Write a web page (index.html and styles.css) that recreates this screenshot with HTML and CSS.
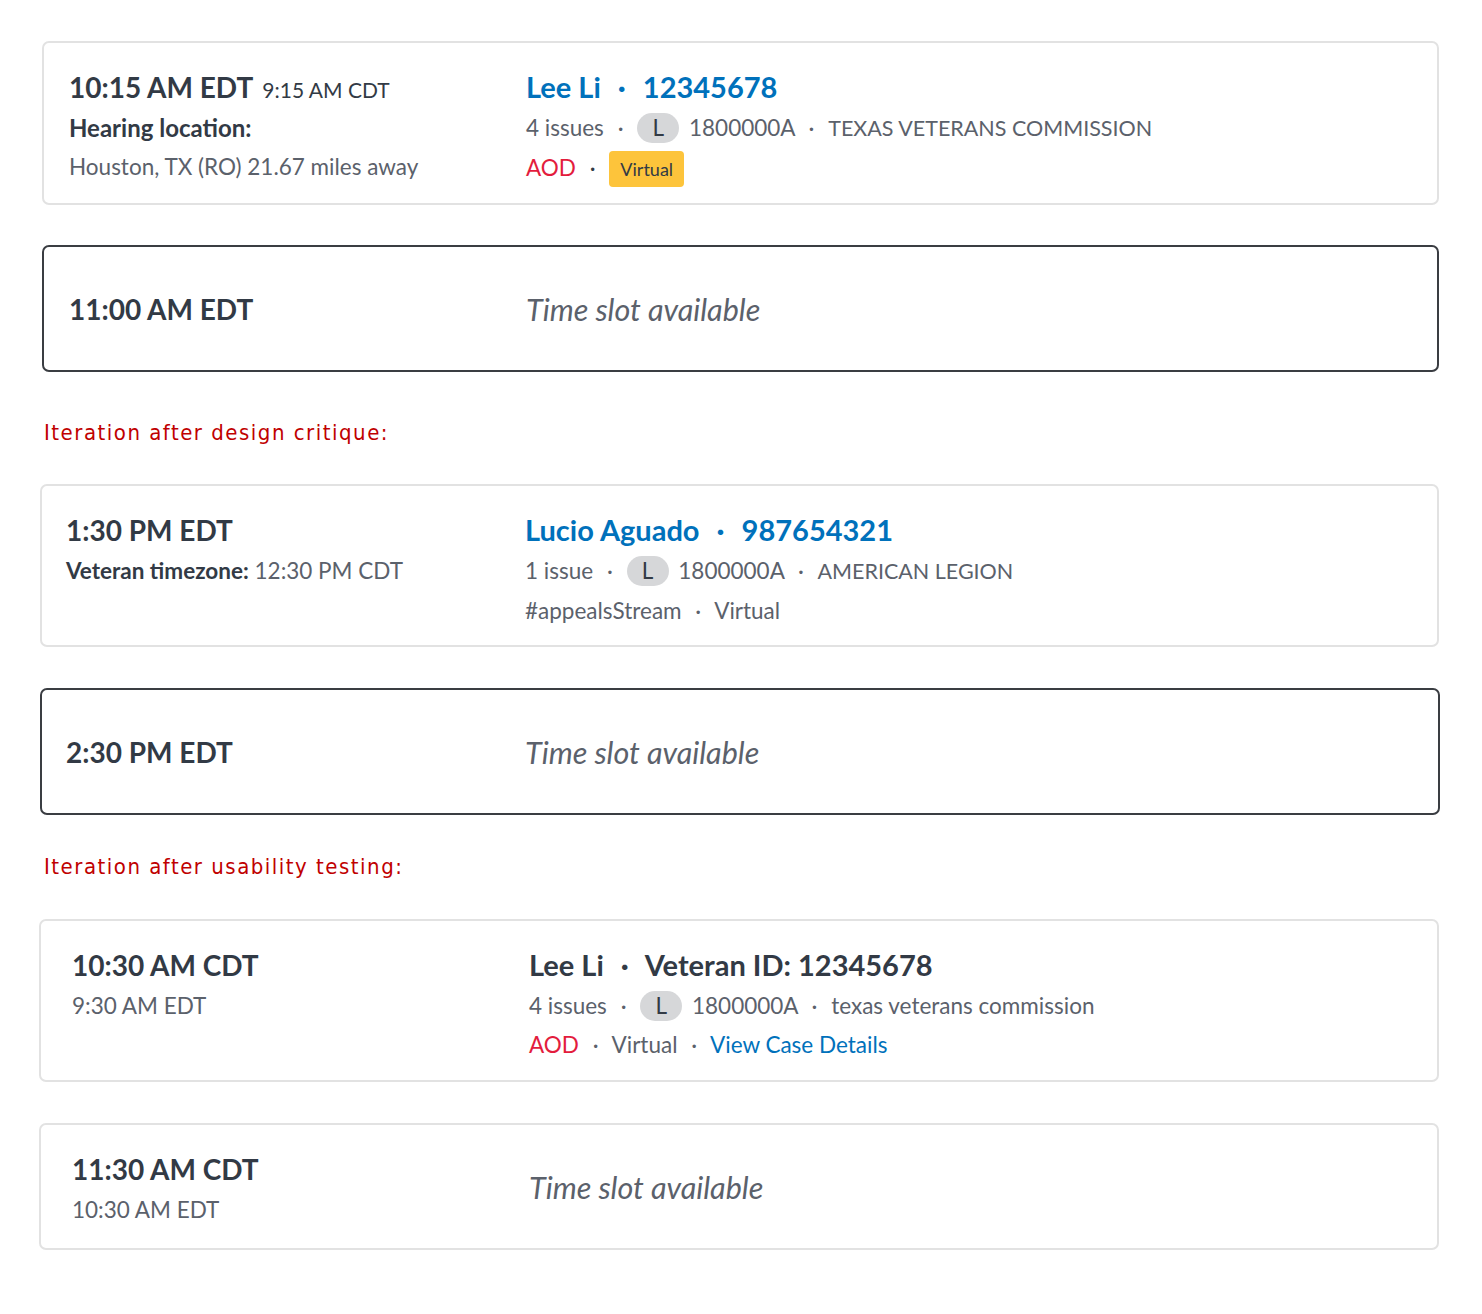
FILE: index.html
```html
<!DOCTYPE html>
<html>
<head>
<meta charset="utf-8">
<link rel="stylesheet" href="styles.css">
</head>
<body>
<div class="page">

  <div class="card c1">
    <div class="left">
      <div class="time-line"><span class="time">10:15 AM EDT</span> <span class="alt">9:15 AM CDT</span></div>
      <div class="line bold">Hearing location:</div>
      <div class="line gray">Houston, TX (RO) 21.67 miles away</div>
    </div>
    <div class="right">
      <div class="name blue">Lee Li <span class="sep">·</span> 12345678</div>
      <div class="line gray">4 issues <span class="sep">·</span> <span class="pill">L</span> 1800000A <span class="sep">·</span> <span class="caps">TEXAS VETERANS COMMISSION</span></div>
      <div class="line"><span class="aod">AOD</span> <span class="sep">·</span> <span class="virtual">Virtual</span></div>
    </div>
  </div>

  <div class="card slot s1">
    <div class="left"><span class="time">11:00 AM EDT</span></div>
    <div class="right"><span class="avail">Time slot available</span></div>
  </div>

  <div class="label l1">Iteration after design critique:</div>

  <div class="card c3">
    <div class="left">
      <div class="time-line"><span class="time">1:30 PM EDT</span></div>
      <div class="line gray"><b class="dark">Veteran timezone:</b> 12:30 PM CDT</div>
    </div>
    <div class="right">
      <div class="name blue">Lucio Aguado <span class="sep">·</span> 987654321</div>
      <div class="line gray">1 issue <span class="sep">·</span> <span class="pill">L</span> 1800000A <span class="sep">·</span> <span class="caps">AMERICAN LEGION</span></div>
      <div class="line gray">#appealsStream <span class="sep">·</span> Virtual</div>
    </div>
  </div>

  <div class="card slot s2">
    <div class="left"><span class="time">2:30 PM EDT</span></div>
    <div class="right"><span class="avail">Time slot available</span></div>
  </div>

  <div class="label l2">Iteration after usability testing:</div>

  <div class="card c5">
    <div class="left">
      <div class="time-line"><span class="time">10:30 AM CDT</span></div>
      <div class="line gray">9:30 AM EDT</div>
    </div>
    <div class="right">
      <div class="name dark">Lee Li <span class="sep">·</span> Veteran ID: 12345678</div>
      <div class="line gray">4 issues <span class="sep">·</span> <span class="pill">L</span> 1800000A <span class="sep">·</span> texas veterans commission</div>
      <div class="line gray"><span class="aod">AOD</span> <span class="sep">·</span> Virtual <span class="sep">·</span> <span class="link">View Case Details</span></div>
    </div>
  </div>

  <div class="card s3">
    <div class="left">
      <div class="time-line"><span class="time">11:30 AM CDT</span></div>
      <div class="line gray">10:30 AM EDT</div>
    </div>
    <div class="right mid"><span class="avail">Time slot available</span></div>
  </div>

</div>
</body>
</html>
```

FILE: styles.css
```css
* { box-sizing: border-box; }
html, body { margin: 0; padding: 0; background: #fff; }
body {
  font-family: "Lato", "Open Sans", sans-serif;
  color: #323a45;
}
.page {
  padding: 41px 43px 0 42px;
  display: flex;
  flex-direction: column;
}
.card {
  display: flex;
  border: 2px solid #e2e2e2;
  border-radius: 7px;
  background: #fff;
  padding: 23px 26px 0 25px;
  height: 163px;
  flex: none;
}
.slot {
  height: 127px;
  align-items: center;
  padding-top: 0;
}
.s1, .s2 { border-color: #3a3d42; }
.c1 { height: 164px; margin-bottom: 40px; }
.c3 { margin-left: -2px; margin-bottom: 41px; padding-left: 24px; }
.c3 .left { width: 459px; }
.s2 { margin-left: -2px; margin-right: -1px; padding-left: 24px; }
.s2 .left { width: 459px; }
.c5 { margin-left: -3px; margin-bottom: 41px; padding-left: 31px; }
.s3 { margin-left: -3px; padding-left: 31px; height: 127px; }
.left { width: 457px; flex: none; }
.right { flex: 1; }
.mid { align-self: center; margin-top: -23px; }
.time-line { line-height: 42px; height: 42px; }
.time { font-size: 28px; font-weight: 700; color: #323a45; }
.alt { font-size: 21px; color: #323a45; margin-left: 5px; }
.line { font-size: 22.5px; line-height: 39px; }
.caps { font-size: 21.5px; }
.bold { font-weight: 700; font-size: 24px; }
.gray { color: #5b616b; }
.dark { color: #323a45; }
b.dark { font-weight: 700; }
.name { font-size: 29px; font-weight: 700; line-height: 42px; }
.blue { color: #0071bb; }
.sep { margin: 0 8px; }
.name .sep { margin: 0 10px; }
.pill {
  display: inline-block;
  background: #d6d7d9;
  color: #323a45;
  border-radius: 15px;
  width: 42px;
  height: 30px;
  line-height: 30px;
  text-align: center;
  margin-right: 4px;
}
.aod { color: #e31c3d; }
.virtual {
  display: inline-block;
  background: #fdc43b;
  color: #323a45;
  border-radius: 4px;
  font-size: 18px;
  padding: 0 11px;
  height: 36px;
  line-height: 36px;
}
.link { color: #0071bb; }
.avail { font-size: 30.5px; font-weight: 400; font-style: italic; color: #5b616b; }
.label {
  color: #c00000;
  font-family: "DejaVu Sans Condensed", "DejaVu Sans", sans-serif;
  font-size: 22px;
  letter-spacing: 1.5px;
  margin-left: 2px;
  line-height: 26px;
  height: 26px;
  flex: none;
}
.l1 { margin-top: 48px; margin-bottom: 38px; }
.l2 { margin-top: 39px; margin-bottom: 39px; }
```
